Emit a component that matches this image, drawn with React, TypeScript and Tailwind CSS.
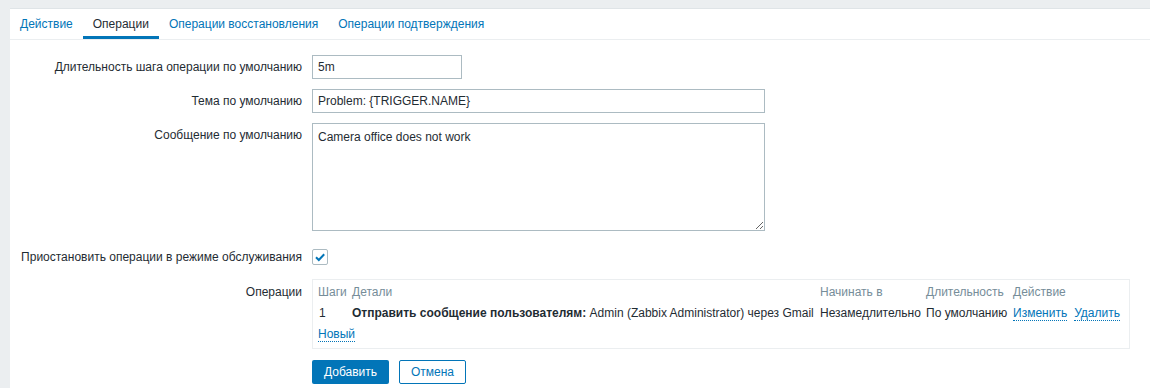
import React from "react";

const font = { fontFamily: '"Liberation Sans", Arial, sans-serif' };

function Link({ children }: { children: React.ReactNode }) {
  return (
    <span className="text-[#0275b8] border-b border-dotted border-[#0275b8] leading-[13px] inline-block">
      {children}
    </span>
  );
}

export default function App() {
  return (
    <div className="w-[1150px] h-[388px] bg-[#ebeef0] pt-[8px] pl-[10px] overflow-hidden text-[12px] text-[#1f2c33]" style={font}>
      <div className="bg-white h-full border-t border-[#dfe4e7]">
        {/* Tabs */}
        <div className="flex h-[31px] border-b border-[#ebeef0]">
          <div className="px-[10px] h-[30px] flex items-center text-[#0275b8]">Действие</div>
          <div className="px-[10px] h-[30px] flex items-center border-b-[3px] border-[#0275b8] pt-[3px]">Операции</div>
          <div className="px-[10px] h-[30px] flex items-center text-[#0275b8]">Операции восстановления</div>
          <div className="px-[10px] h-[30px] flex items-center text-[#0275b8]">Операции подтверждения</div>
        </div>

        {/* Form */}
        <div className="pt-[15px] grid grid-cols-[292px_1fr] gap-x-[10px] gap-y-[10px]">
          <div className="h-[24px] flex items-center justify-end">Длительность шага операции по умолчанию</div>
          <div>
            <div className="w-[150px] h-[24px] border border-[#acbbc2] px-[5px] flex items-center">5m</div>
          </div>

          <div className="h-[24px] flex items-center justify-end">Тема по умолчанию</div>
          <div>
            <div className="w-[453px] h-[24px] border border-[#acbbc2] px-[5px] flex items-center">Problem: {"{TRIGGER.NAME}"}</div>
          </div>

          <div className="h-[24px] flex items-center justify-end">Сообщение по умолчанию</div>
          <div className="mb-[4px]">
            <textarea
              readOnly
              defaultValue="Camera office does not work"
              className="block w-[453px] h-[108px] border border-[#acbbc2] px-[5px] py-[4px] text-[12px] text-[#1f2c33] outline-none resize"
              style={font}
            />
          </div>

          <div className="h-[24px] flex items-center justify-end">Приостановить операции в режиме обслуживания</div>
          <div className="h-[24px] flex items-center">
            <div className="w-[16px] h-[16px] border border-[#acbbc2] rounded-[2px] flex items-center justify-center">
              <svg width="12" height="12" viewBox="0 0 12 12">
                <path d="M2 6.2 L4.8 9 L10.2 3.2" fill="none" stroke="#0275b8" strokeWidth="2" />
              </svg>
            </div>
          </div>

          <div className="flex justify-end pt-[3px] leading-[21px]">Операции</div>
          <div>
            <div className="w-[818px] border border-[#ebeef0] pl-[5px] pt-[2px] pb-[3px]">
              <div className="grid grid-cols-[34px_468px_106px_87px_1fr] leading-[21px] h-[21px] text-[#768d99]">
                <div>Шаги</div>
                <div>Детали</div>
                <div>Начинать в</div>
                <div>Длительность</div>
                <div>Действие</div>
              </div>
              <div className="grid grid-cols-[34px_468px_106px_87px_1fr] leading-[21px] h-[21px]">
                <div className="pl-[1px]">1</div>
                <div className="whitespace-nowrap">
                  <b>Отправить сообщение пользователям:</b> Admin (Zabbix Administrator) через Gmail
                </div>
                <div>Незамедлительно</div>
                <div>По умолчанию</div>
                <div className="flex gap-[7px] items-center">
                  <Link>Изменить</Link>
                  <Link>Удалить</Link>
                </div>
              </div>
              <div className="h-[21px] flex items-center">
                <Link>Новый</Link>
              </div>
            </div>
          </div>

          <div></div>
          <div className="flex gap-[10px] pt-[1px]">
            <div className="w-[77px] h-[24px] bg-[#0275b8] text-white rounded-[2px] flex items-center justify-center">Добавить</div>
            <div className="w-[67px] h-[24px] bg-white text-[#0275b8] border border-[#0275b8] rounded-[2px] flex items-center justify-center">Отмена</div>
          </div>
        </div>
      </div>
    </div>
  );
}
